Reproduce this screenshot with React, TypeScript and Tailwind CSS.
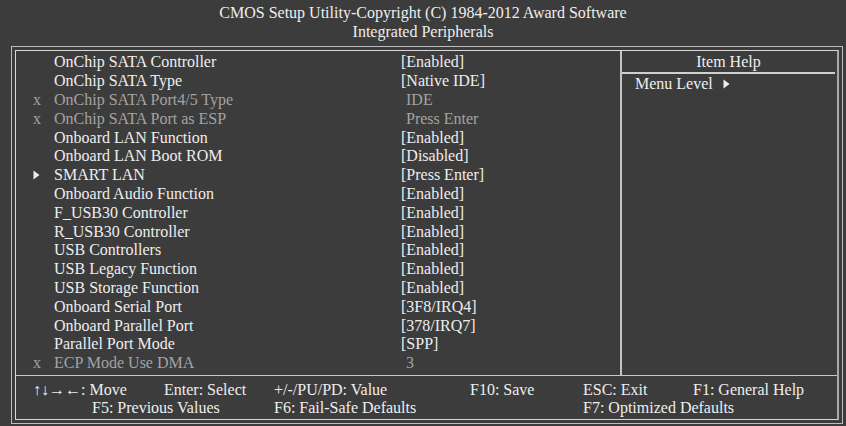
import React from 'react';

type Row = { label: string; value: string; h: string; mark?: 'x' | 'sub' };

// row heights alternate 18/19 so the 18.8px pitch stays on whole pixels
const rows: Row[] = [
  { label: 'OnChip SATA Controller', value: '[Enabled]', h: 'h-[18px] leading-[18px]' },
  { label: 'OnChip SATA Type', value: '[Native IDE]', h: 'h-[19px] leading-[19px]' },
  { label: 'OnChip SATA Port4/5 Type', value: 'IDE', h: 'h-[19px] leading-[19px]', mark: 'x' },
  { label: 'OnChip SATA Port as ESP', value: 'Press Enter', h: 'h-[19px] leading-[19px]', mark: 'x' },
  { label: 'Onboard LAN Function', value: '[Enabled]', h: 'h-[19px] leading-[19px]' },
  { label: 'Onboard LAN Boot ROM', value: '[Disabled]', h: 'h-[18px] leading-[18px]' },
  { label: 'SMART LAN', value: '[Press Enter]', h: 'h-[19px] leading-[19px]', mark: 'sub' },
  { label: 'Onboard Audio Function', value: '[Enabled]', h: 'h-[19px] leading-[19px]' },
  { label: 'F_USB30 Controller', value: '[Enabled]', h: 'h-[19px] leading-[19px]' },
  { label: 'R_USB30 Controller', value: '[Enabled]', h: 'h-[19px] leading-[19px]' },
  { label: 'USB Controllers', value: '[Enabled]', h: 'h-[18px] leading-[18px]' },
  { label: 'USB Legacy Function', value: '[Enabled]', h: 'h-[19px] leading-[19px]' },
  { label: 'USB Storage Function', value: '[Enabled]', h: 'h-[19px] leading-[19px]' },
  { label: 'Onboard Serial Port', value: '[3F8/IRQ4]', h: 'h-[19px] leading-[19px]' },
  { label: 'Onboard Parallel Port', value: '[378/IRQ7]', h: 'h-[19px] leading-[19px]' },
  { label: 'Parallel Port Mode', value: '[SPP]', h: 'h-[18px] leading-[18px]' },
  { label: 'ECP Mode Use DMA', value: '3', h: 'h-[19px] leading-[19px]', mark: 'x' },
];

const Tri: React.FC = () => (
  <svg width="7" height="10" viewBox="0 0 7 10" className="inline-block">
    <path d="M0.5 0.5 L6.5 5 L0.5 9.5 Z" fill="#eeeeee" />
  </svg>
);

export default function App() {
  return (
    <div
      className="w-[846px] h-[426px] bg-[#3c3c3c] text-[#eeeeee] text-[16px] overflow-hidden"
      style={{ fontFamily: '"Liberation Serif", "Times New Roman", serif' }}
    >
      {/* title */}
      <div className="h-[46px] pt-[3px] flex flex-col items-center leading-[19px]">
        <div>CMOS Setup Utility-Copyright (C) 1984-2012 Award Software</div>
        <div>Integrated Peripherals</div>
      </div>

      {/* double frame */}
      <div className="ml-[11px] w-[832px] h-[378px] border border-[#bcbcbc] p-[3px]">
        <div className="h-full border border-[#d8d8d8] border-r-2 border-r-[#a8a8a8] flex flex-col">
          <div className="h-[325px] flex border-b border-[#c8c8c8]">
            {/* item list */}
            <div className="w-[606px] pt-[2px] border-r-2 border-[#c4c4c4]">
              {rows.map((r) => {
                const off = r.mark === 'x';
                return (
                  <div key={r.label} className={`flex ${r.h} ${off ? 'text-[#a3a3a3]' : ''}`}>
                    <div className="w-[38px] pl-[17px] flex items-center">
                      {r.mark === 'x' && <span>x</span>}
                      {r.mark === 'sub' && <Tri />}
                    </div>
                    <div className="w-[347px] whitespace-nowrap">{r.label}</div>
                    <div className={`whitespace-nowrap ${off ? 'pl-[5px]' : ''}`}>{r.value}</div>
                  </div>
                );
              })}
            </div>

            {/* help pane */}
            <div className="flex-1 pt-[2px]">
              <div className="h-[18px] leading-[18px] text-center pr-[2px]">Item Help</div>
              <div className="mt-[1px] mr-[2px] border-t-2 border-[#d0d0d0]" />
              <div className="h-[19px] leading-[19px] pl-[13px] flex gap-[10px]">
                <span>Menu Level</span>
                <span className="flex items-center">
                  <Tri />
                </span>
              </div>
            </div>
          </div>

          {/* key legend */}
          <div className="pt-[5px] leading-[18px] whitespace-nowrap">
            <div className="flex pl-[17px]">
              <div className="w-[131px]">↑↓→←: Move</div>
              <div className="w-[110px]">Enter: Select</div>
              <div className="w-[196px]">+/-/PU/PD: Value</div>
              <div className="w-[113px]">F10: Save</div>
              <div className="w-[110px]">ESC: Exit</div>
              <div>F1: General Help</div>
            </div>
            <div className="flex pl-[76px]">
              <div className="w-[182px]">F5: Previous Values</div>
              <div className="w-[309px]">F6: Fail-Safe Defaults</div>
              <div>F7: Optimized Defaults</div>
            </div>
          </div>
        </div>
      </div>
    </div>
  );
}
